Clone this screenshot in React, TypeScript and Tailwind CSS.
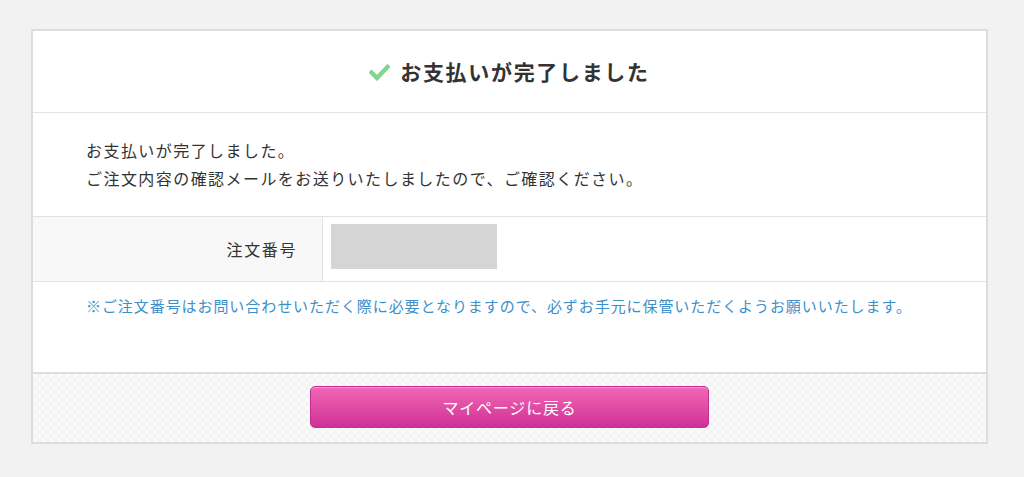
export default function App() {
  return (
    <div className="min-h-[477px] w-full bg-[#f2f2f2] pt-[29px] font-['Noto_Sans_CJK_JP','Noto_Sans',sans-serif] text-[#333]">
      <div className="ml-[31px] w-[957px] border-2 border-[#dcdce1] bg-white">
        {/* header */}
        <div className="flex h-[82px] items-center justify-center gap-[10px] border-b border-[#e2e2e2]">
          <svg width="21" height="17" viewBox="0 0 21 17" className="mt-[1px]">
            <path d="M2.5 8.5 L8 14 L18.5 3" fill="none" stroke="#82d58f" strokeWidth="4.4" strokeLinecap="square" />
          </svg>
          <h1 className="text-[21px] font-bold leading-none tracking-[0.08em] text-[#333]">お支払いが完了しました</h1>
        </div>

        {/* message */}
        <div className="px-[53px] pt-[23px] pb-[24px] text-[16px] leading-[28px] tracking-[0.09em]">
          <p>お支払いが完了しました。</p>
          <p>ご注文内容の確認メールをお送りいたしましたので、ご確認ください。</p>
        </div>

        {/* order number row */}
        <div className="flex h-[66px] border-y border-[#e2e2e2]">
          <div className="flex w-[290px] items-center justify-end border-r border-[#e2e2e2] bg-[#f8f8f8] pr-[25px] text-[16px] tracking-[0.1em]">
            注文番号
          </div>
          <div className="pl-[8px] pt-[7px]">
            <div className="h-[45px] w-[166px] bg-[#d5d5d5]" />
          </div>
        </div>

        {/* note */}
        <div className="h-[90px] px-[53px] pt-[14px] text-[15px] leading-[20px] tracking-[0.062em] text-[#3d8fca]">
          ※ご注文番号はお問い合わせいただく際に必要となりますので、必ずお手元に保管いただくようお願いいたします。
        </div>

        {/* footer */}
        <div className="flex justify-center border-t-2 border-[#dcdce1] bg-[#f7f7f7] bg-[repeating-conic-gradient(#f4f4f4_0%_25%,#fafafa_0%_50%)] bg-[length:8px_8px] pt-[12px] pb-[14px]">
          <button className="flex h-[42px] w-[399px] items-center justify-center rounded-[5px] border border-[#c22f8e] bg-gradient-to-b from-[#f166b4] to-[#d02f97] text-[16px] tracking-[0.05em] text-white shadow-[inset_0_1px_0_rgba(255,255,255,0.35)]">
            マイページに戻る
          </button>
        </div>
      </div>
    </div>
  );
}
